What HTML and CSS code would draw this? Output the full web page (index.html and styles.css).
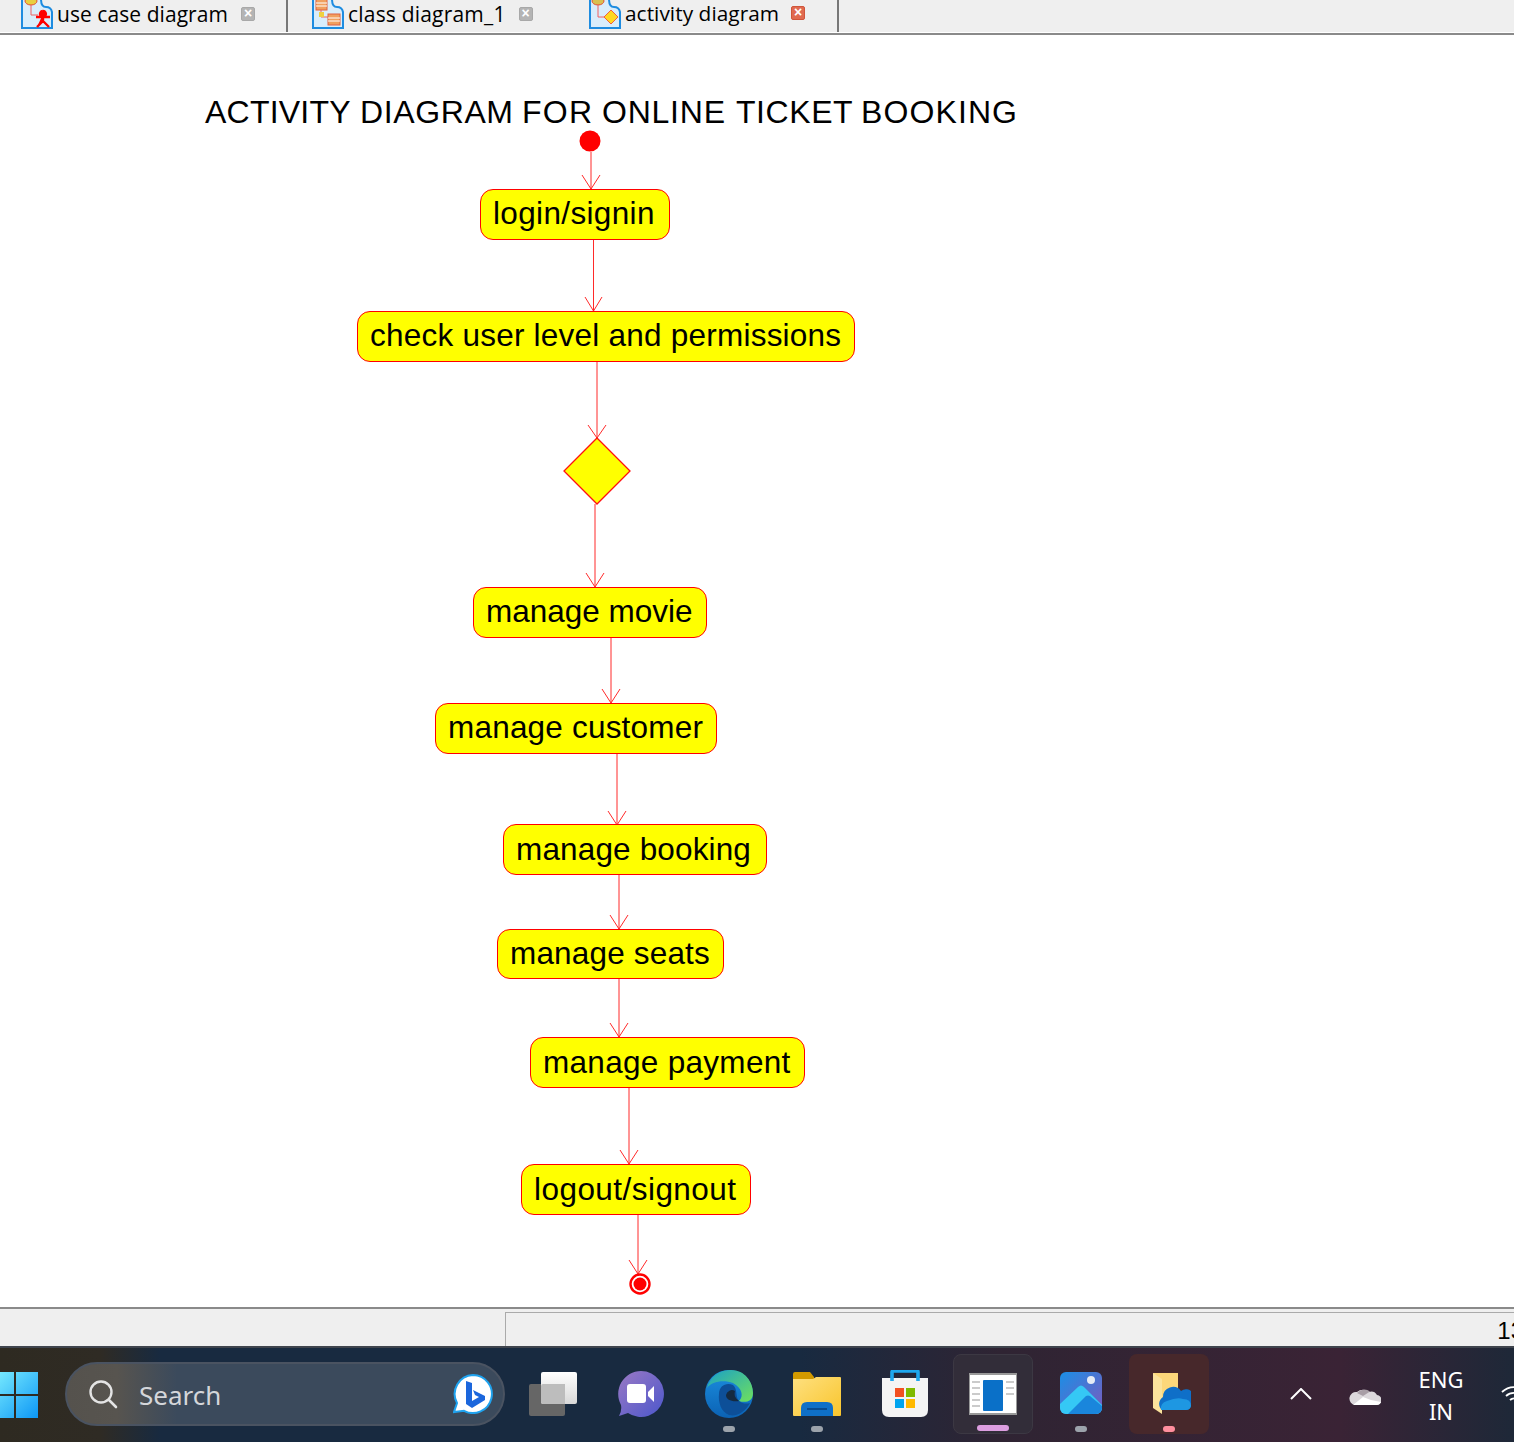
FILE: index.html
```html
<!DOCTYPE html>
<html lang="en">
<head>
<meta charset="utf-8">
<title>activity diagram</title>
<link rel="stylesheet" href="styles.css">
</head>
<body>
<div class="app">
  <div class="tabs">
    <div class="tab tab-a">
      <svg class="tab-icon" viewBox="0 0 32 32"><path d="M1 1H20Q20 9 25 9T31 14V30H1Z" fill="#d9edfb" stroke="#1e8ce0" stroke-width="2"/><ellipse cx="10" cy="3" rx="6" ry="4" fill="#e8d040" stroke="#e05030"/><path d="M10 7V17H17" fill="none" stroke="#f06060"/><path d="M22 13a3 3 0 1 1-.1 0M15 19H29M22 16V23L16 29M22 23L28 29" fill="#f00" stroke="#f00" stroke-width="2.4"/></svg>
      <span class="tab-label">use case diagram</span>
      <span class="tab-close">×</span>
    </div>
    <div class="tab tab-b">
      <svg class="tab-icon" viewBox="0 0 32 32"><path d="M1 1H20Q20 9 25 9T31 14V30H1Z" fill="#d9edfb" stroke="#1e8ce0" stroke-width="2"/><rect x="4" y="1" width="11" height="11" fill="#f0a060" stroke="#e06040"/><path d="M4 5H15M4 8H15" stroke="#fff"/><path d="M9 12V19H16" fill="none" stroke="#f06060"/><rect x="16" y="16" width="12" height="11" fill="#f0a060" stroke="#e06040"/><path d="M16 20H28M16 23H28" stroke="#fff"/><rect x="7" y="14" width="5" height="5" fill="#f0d040"/></svg>
      <span class="tab-label">class diagram_1</span>
      <span class="tab-close">×</span>
    </div>
    <div class="tab tab-c">
      <svg class="tab-icon" viewBox="0 0 32 32"><path d="M1 1H20Q20 9 25 9T31 14V30H1Z" fill="#d9edfb" stroke="#1e8ce0" stroke-width="2"/><ellipse cx="9" cy="3" rx="6" ry="4" fill="#d8c050" stroke="#e05030"/><path d="M9 7V19H16" fill="none" stroke="#f06060"/><path d="M22 12L29 19L22 26L15 19Z" fill="#ffd820" stroke="#f06040"/></svg>
      <span class="tab-label">activity diagram</span>
      <span class="tab-close tab-close-active">×</span>
    </div>
  </div>

  <div class="canvas">
    <svg class="edges" viewBox="0 35 1514 1272">
      <text class="diagram-title" y="123"><tspan x="205" textLength="145">ACTIVITY</tspan> <tspan x="360" textLength="153">DIAGRAM</tspan> <tspan x="522" textLength="70">FOR</tspan> <tspan x="602" textLength="123">ONLINE</tspan> <tspan x="736" textLength="116">TICKET</tspan> <tspan x="861" textLength="156">BOOKING</tspan></text>
      <circle cx="590" cy="141" r="10.5" fill="#f00"/>
      <g fill="none" stroke="#ff2a2a" stroke-width="1">
        <path d="M591 152V189M582 175L591 189L600 175"/>
        <path d="M593.5 240V311M585 297L593.5 311L602 297"/>
        <path d="M597 361V438M588 425L597 438L606 425"/>
        <path d="M595 504V587M586 573L595 587L604 573"/>
        <path d="M611 637V703M602 689L611 703L620 689"/>
        <path d="M617 753V825M608 811L617 825L626 811"/>
        <path d="M619 875V929M610 915L619 929L628 915"/>
        <path d="M619 979V1037M610 1023L619 1037L628 1023"/>
        <path d="M629 1088V1164M620 1150L629 1164L638 1150"/>
        <path d="M638 1215V1274M629 1260L638 1274L647 1260"/>
      </g>
      <path d="M597 438L630 471L597 504L564 471Z" fill="#ff0" stroke="#ff1010" stroke-width="1.300"/>
      <circle cx="640" cy="1284" r="9.5" fill="#fff" stroke="#f00" stroke-width="2.4"/>
      <circle cx="640" cy="1284" r="6.5" fill="#f00"/>
    </svg>
    <div class="node n-login">login/signin</div>
    <div class="node n-check">check user level and permissions</div>
    <div class="node n-movie">manage movie</div>
    <div class="node n-customer">manage customer</div>
    <div class="node n-booking">manage booking</div>
    <div class="node n-seats">manage seats</div>
    <div class="node n-payment">manage payment</div>
    <div class="node n-logout">logout/signout</div>
  </div>

  <div class="status">
    <div class="status-left"></div>
    <div class="status-right">13</div>
  </div>

  <div class="taskbar">
    <svg class="start" viewBox="0 0 46 46">
      <defs><linearGradient id="win" x1="0" y1="0" x2="1" y2="1"><stop offset="0" stop-color="#7ff0ff"/><stop offset="1" stop-color="#0d97f5"/></linearGradient></defs>
      <path d="M0 0H22V22H0ZM24 0H46V22H24ZM0 24H22V46H0ZM24 24H46V46H24Z" fill="url(#win)"/>
    </svg>
    <div class="search">
      <svg class="search-icon" viewBox="0 0 30 30"><circle cx="13" cy="13" r="10.5" fill="none" stroke="#e4e4e4" stroke-width="2.4"/><path d="M21 21L28 28" stroke="#e4e4e4" stroke-width="2.6" stroke-linecap="round"/></svg>
      <span class="search-text">Search</span>
      <svg class="bing" viewBox="0 0 40 40">
        <path d="M20 1a19 19 0 1 1-9 35.800L1 38l3-9A19 19 0 0 1 20 1Z" fill="#fff" stroke="#1fa2ee" stroke-width="2"/>
        <path d="M13 7l6 2v18l7-4-4-2-2-5 12 6v4l-13 8-6-4Z" fill="#1b66dc"/>
      </svg>
    </div>
    <div class="apps">
      <div class="slot">
        <svg class="app-icon" viewBox="0 0 48 48"><defs><linearGradient id="tv" x1="0" y1="0" x2="0" y2="1"><stop offset="0" stop-color="#fff"/><stop offset="1" stop-color="#d8d8d8"/></linearGradient></defs><rect x="0" y="14" width="36" height="32" rx="2" fill="#666"/><rect x="12" y="2" width="36" height="32" rx="2" fill="url(#tv)"/><path d="M14 14H36V34H14Q12 34 12 32V16Q12 14 14 14Z" fill="#bdbdbd"/></svg>
      </div>
      <div class="slot">
        <svg class="app-icon" viewBox="0 0 48 48"><defs><linearGradient id="meet" x1="0" y1="0" x2="1" y2="1"><stop offset="0" stop-color="#9a79c4"/><stop offset="1" stop-color="#4c57cc"/></linearGradient></defs><path d="M24 1a23 23 0 1 1-13 42L2 46q3-5 2-11A23 23 0 0 1 24 1Z" fill="url(#meet)"/><rect x="10" y="14" width="19" height="19" rx="3" fill="#fff"/><path d="M31 22l6-6v16l-6-6Z" fill="#fff"/></svg>
      </div>
      <div class="slot">
        <svg class="app-icon" viewBox="0 0 48 48"><defs><linearGradient id="edge" x1="0" y1="0" x2="1" y2="1"><stop offset="0" stop-color="#1aa0c8"/><stop offset="1" stop-color="#6fe05c"/></linearGradient><linearGradient id="edgeb" x1="0" y1="0" x2="0" y2="1"><stop offset="0" stop-color="#1c8fe0"/><stop offset="1" stop-color="#0b62b4"/></linearGradient></defs><circle cx="24" cy="24" r="24" fill="url(#edgeb)"/><path d="M2 18C6 4 18 0 26 0C40 0 48 12 48 23C48 32 40 33 34 31C39 26 37 18 28 13C18 9 6 12 2 18Z" fill="url(#edge)"/><path d="M14 24C14 15 22 12 28 15C33 19 30 27 34 31C38 34 42 34 45 33C40 42 32 47 24 45C16 42 13 32 14 24Z" fill="#0d4f98"/><path d="M21 25a6 6 0 0 1 9-4c-1 4 0 7 4 10c-7 1-13-1-13-6Z" fill="#152a40"/></svg>
        <span class="pip"></span>
      </div>
      <div class="slot">
        <svg class="app-icon" viewBox="0 0 48 48"><defs><linearGradient id="fold" x1="0" y1="0" x2="1" y2="1"><stop offset="0" stop-color="#fee080"/><stop offset="1" stop-color="#f9c52c"/></linearGradient></defs><path d="M0 4q0-2 2-2H17l4 5v3H0Z" fill="#d29a00"/><path d="M0 9H20l3-2H47q1 0 1 1V45q0 1-1 1H1q-1 0-1-1Z" fill="url(#fold)"/><path d="M8 46V38q0-6 6-6H34q6 0 6 6V46Z" fill="#0f70c8"/><path d="M14 39H34" stroke="#073f7c" stroke-width="1.500"/></svg>
        <span class="pip"></span>
      </div>
      <div class="slot">
        <svg class="app-icon" viewBox="0 0 48 48"><path d="M1 8H47V40q0 7-7 7H8q-7 0-7-7Z" fill="#f4f4f4"/><path d="M11 11V2Q11 1 12 1H36Q37 1 37 2V11" fill="none" stroke="#1ea7ee" stroke-width="3.600"/><rect x="14" y="18" width="9" height="9" fill="#f25022"/><rect x="25" y="18" width="9" height="9" fill="#7fba00"/><rect x="14" y="29" width="9" height="9" fill="#00a4ef"/><rect x="25" y="29" width="9" height="9" fill="#ffb900"/></svg>
      </div>
      <div class="slot slot-on">
        <svg class="app-icon" viewBox="0 0 48 40"><rect width="48" height="40" fill="#fff" stroke="#999" stroke-width="2"/><rect x="14" y="6" width="20" height="31" rx="1" fill="#0a70c8"/><path d="M3 8H11M3 14H11M3 20H11M3 26H11M3 32H11M37 8H45M37 14H45M37 20H45" stroke="#bbb" stroke-width="1.400"/></svg>
        <span class="pip pip-wide"></span>
      </div>
      <div class="slot">
        <svg class="app-icon icon-photos" viewBox="0 0 42 42"><defs><linearGradient id="ph" x1="0" y1="0" x2="1" y2="1"><stop offset="0" stop-color="#1a8fe6"/><stop offset="1" stop-color="#7d59bd"/></linearGradient><clipPath id="phc"><rect width="42" height="42" rx="6"/></clipPath></defs><g clip-path="url(#phc)"><rect width="42" height="42" fill="url(#ph)"/><circle cx="31" cy="8" r="4" fill="#e6ecf6"/><path d="M0 32L18 15Q21 12 24 15L42 33V42H0Z" fill="#35c8f5"/><path d="M8 42L26 24Q28 23 30 24L42 34V42Z" fill="#1a86dc"/></g></svg>
        <span class="pip"></span>
      </div>
      <div class="slot slot-alert">
        <svg class="app-icon icon-onedrive" viewBox="0 0 38 41"><path d="M0 0H25V31H8Z" fill="#fcd77a"/><path d="M0 0L9 6V41L0 35Z" fill="#fbe39c"/><path d="M9 37a8 8 0 0 1 1-13a10 10 0 0 1 18-6a8 8 0 0 1 10 13q0 6-5 6Z" fill="#0f6fc8"/><path d="M8 37q-1-7 6-9q10-4 16-2q8 0 8 7q-1 4-5 4Z" fill="#1e97e2"/></svg>
        <span class="pip pip-alert"></span>
      </div>
    </div>
    <div class="tray">
      <svg class="chevron" viewBox="0 0 22 12"><path d="M1 11L11 1L21 11" fill="none" stroke="#fff" stroke-width="2"/></svg>
      <svg class="cloud" viewBox="0 0 32 21"><path d="M6 21H27a5 5 0 0 0 1-10a7 7 0 0 0-8-3A9.500 9.500 0 0 0 8 8a6.500 6.500 0 0 0-2 13Z" fill="#dcd8dc"/><path d="M8 9A9.500 9.500 0 0 1 21 7.500L14 12Z" fill="#a89ea6"/><path d="M4 21L14 13L22 16L32 18Q31 21 27 21Z" fill="#fff"/></svg>
      <div class="lang"><span>ENG</span><span>IN</span></div>
      <svg class="wifi" viewBox="0 0 26 20"><path d="M1 8a17 17 0 0 1 24 0M5 12a12 12 0 0 1 16 0M9 16a6 6 0 0 1 8 0" fill="none" stroke="#fff" stroke-width="1.800"/></svg>
    </div>
  </div>
</div>
</body>
</html>
```

FILE: styles.css
```css
* { box-sizing: border-box; }
html, body { margin: 0; padding: 0; height: 100%; overflow: hidden; background: #fff; }
body { font-family: "Liberation Sans", Arial, sans-serif; }
.app { width: 1514px; height: 1442px; display: flex; flex-direction: column; overflow: hidden; }

/* tabs */
.tabs { height: 35px; flex: none; display: flex; background: #efefef; border-bottom: 2px solid #8a8a8a; box-shadow: inset 0 -1px 0 #fff; overflow: hidden; }
.tab { height: 32px; display: flex; align-items: flex-start; flex: none; }
.tab-a { width: 288px; padding-left: 21px; border-right: 2px solid #777; }
.tab-b { width: 277px; padding-left: 24px; }
.tab-c { width: 274px; padding-left: 24px; border-right: 2px solid #777; }
.tab-icon { width: 32px; height: 32px; margin-top: -2px; flex: none; }
.tab-label { font-family: "Open Sans", "Noto Sans", sans-serif; font-size: 21px; line-height: 28px; margin-left: 4px; color: #000; white-space: nowrap; letter-spacing: .06px; }
.tab-b .tab-label { letter-spacing: .2px; }
.tab-c .tab-label { font-size: 20.800px; line-height: 26px; letter-spacing: .06px; }
.tab-close { width: 14px; height: 14px; margin-left: 13px; margin-top: 7px; border-radius: 2px; background: #b4b4b4; border: 1px solid #a8a8a8; color: #fff; font-size: 14px; font-weight: bold; line-height: 11px; text-align: center; flex: none; }
.tab-c .tab-close { margin-top: 6px; margin-left: 12px; }
.tab-close-active { background: #e06a50; border-color: #d0553a; }

/* canvas */
.canvas { position: relative; height: 1272px; flex: none; background: #fff; overflow: hidden; }
.edges { position: absolute; left: 0; top: 0; width: 1514px; height: 1272px; }
.diagram-title { font-family: "Liberation Sans", Arial, sans-serif; font-size: 32px; fill: #000; }
.node { position: absolute; height: 51px; padding: 0 12px; background: #ff0; border: 1px solid #f00; border-radius: 13px; font-size: 31.500px; line-height: 47px; color: #000; white-space: nowrap; }
.n-login { left: 480px; top: 154px; width: 190px; letter-spacing: .35px; }
.n-check { left: 357px; top: 276px; width: 498px; letter-spacing: .23px; }
.n-movie { left: 473px; top: 552px; width: 234px; }
.n-customer { left: 435px; top: 668px; width: 282px; letter-spacing: .2px; }
.n-booking { left: 503px; top: 789px; width: 264px; letter-spacing: .15px; line-height: 48px; }
.n-seats { left: 497px; top: 894px; width: 227px; height: 50px; letter-spacing: .17px; }
.n-payment { left: 530px; top: 1002px; width: 275px; letter-spacing: .3px; line-height: 49px; }
.n-logout { left: 521px; top: 1129px; width: 230px; letter-spacing: .45px; line-height: 49px; }

/* status bar */
.status { height: 39px; flex: none; display: flex; background: #efefef; border-top: 2px solid #8a8a8a; padding-top: 3px; }
.status-left { width: 505px; }
.status-right { flex: 1; border-left: 1px solid #aaa; border-top: 1px solid #aaa; height: 34px; text-align: right; font-size: 24px; line-height: 36px; white-space: nowrap; overflow: hidden; margin-right: -10px; }

/* taskbar */
.taskbar { height: 96px; flex: none; display: flex; align-items: center; overflow: hidden; border-top: 2px solid #3f444d; padding-bottom: 2px; color: #fff; background: linear-gradient(90deg, #2e2a21 0, #2f2b24 100px, #182a40 160px, #182a40 800px, #2f2433 1000px, #3a2335 1340px, #1e2838 1514px); }
.start { width: 46px; height: 46px; margin: 2px 27px 0 -8px; flex: none; }
.search { width: 440px; height: 64px; flex: none; display: flex; align-items: center; padding: 0 10px 0 21px; border-radius: 32px; border: 2px solid #4a5361; background: linear-gradient(90deg, #55524d 0, #57544f 50px, #3b4a5c 110px, #3b4a5c 100%); }
.search-icon { width: 30px; height: 30px; flex: none; }
.search-text { font-family: "Noto Sans", sans-serif; font-size: 26px; color: #d4d6da; margin-left: 21px; margin-top: 2px; flex: 1; }
.bing { width: 40px; height: 40px; flex: none; }
.apps { display: flex; margin-left: 4px; flex: none; }
.slot { width: 80px; height: 80px; margin: 0 4px; flex: none; position: relative; display: flex; align-items: center; justify-content: center; border-radius: 8px; }
.slot-on { background: #322d39; border: 1px solid #3c3843; }
.slot-alert { background: #47282b; }
.app-icon { width: 48px; height: 48px; display: block; }
.icon-photos { width: 42px; height: 42px; margin-bottom: 2px; }
.icon-onedrive { width: 38px; height: 41px; margin-left: 6px; margin-bottom: 1px; }
.pip { position: absolute; left: 50%; bottom: 2px; width: 12px; height: 6px; margin-left: -6px; border-radius: 3px; background: #9ca3ab; }
.pip-wide { width: 32px; margin-left: -16px; background: #dc9ee0; }
.pip-alert { background: #ff8f9e; }
.tray { display: flex; align-items: center; flex: none; margin-left: 77px; }
.chevron { width: 22px; height: 12px; flex: none; margin-right: 37px; }
.cloud { width: 32px; height: 21px; flex: none; margin-right: 37px; }
.lang { width: 46px; display: flex; flex-direction: column; align-items: center; font-family: "Noto Sans", sans-serif; font-size: 22px; line-height: 32px; margin-top: 2px; flex: none; }
.wifi { width: 26px; height: 20px; flex: none; margin-left: 37px; }
```
